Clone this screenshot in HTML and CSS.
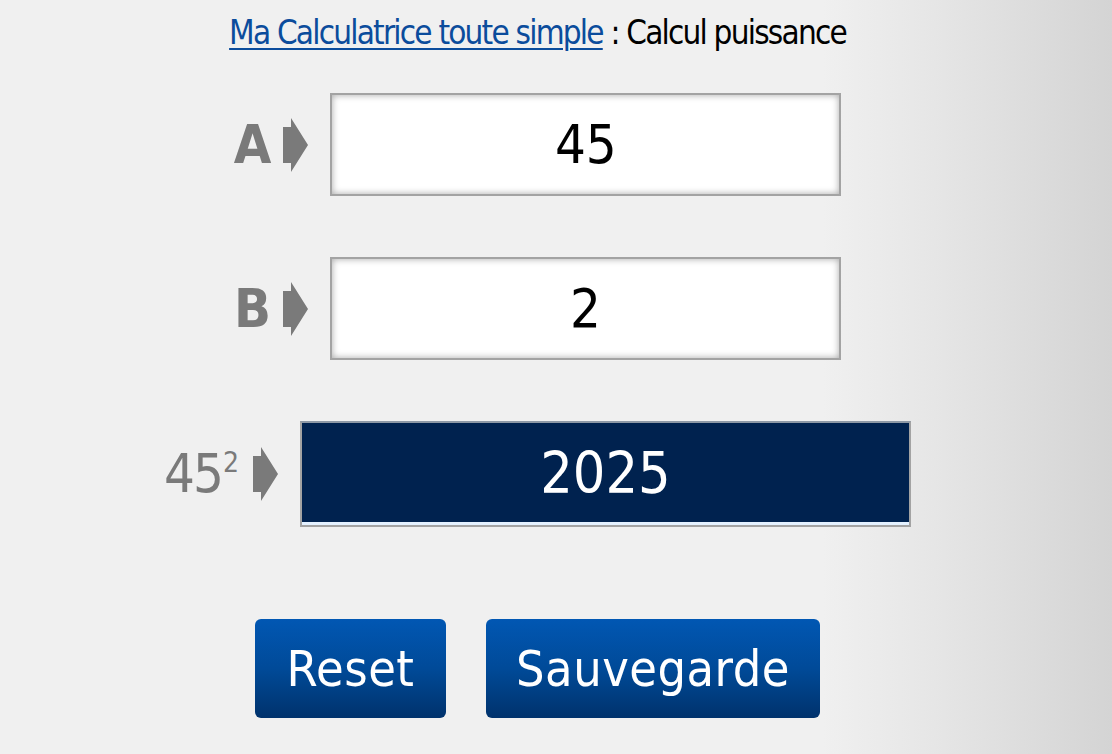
FILE: index.html
```html
<!DOCTYPE html>
<html lang="fr">
<head>
    <meta charset="UTF-8">
    <meta name="viewport" content="width=device-width, initial-scale=1.0">
    <title>Ma Calculatrice toute simple | Calcul puissance</title>
    <link rel="stylesheet" href="styles.css">
</head>
<body>
    <div class="page">
        <h1 class="page-title">
            <a href="#" class="home-link">Ma Calculatrice toute simple</a> : Calcul puissance
        </h1>

        <form class="calc-form">
            <div class="calc-row">
                <label class="calc-label" for="val-a">
                    <span>A</span>
                    <svg class="arrow" viewBox="0 0 25 54"><path d="M0 9 H8 V0 L25 27 L8 54 V45 H0 Z"/></svg>
                </label>
                <input class="calc-input" id="val-a" type="text" value="45">
            </div>

            <div class="calc-row">
                <label class="calc-label" for="val-b">
                    <span>B</span>
                    <svg class="arrow" viewBox="0 0 25 54"><path d="M0 9 H8 V0 L25 27 L8 54 V45 H0 Z"/></svg>
                </label>
                <input class="calc-input" id="val-b" type="text" value="2">
            </div>

            <div class="calc-row">
                <div class="calc-label result-label">
                    <span>45<sup>2</sup></span>
                    <svg class="arrow" viewBox="0 0 25 54"><path d="M0 9 H8 V0 L25 27 L8 54 V45 H0 Z"/></svg>
                </div>
                <div class="calc-result">2025</div>
            </div>

            <div class="button-row">
                <button type="reset" class="calc-button btn-reset">Reset</button>
                <button type="button" class="calc-button btn-save">Sauvegarde</button>
            </div>
        </form>
    </div>
</body>
</html>
```

FILE: styles.css
```css
:root {
    --text: #000000;
    --label: #7a7a7a;
    --link: #0b4c9c;
    --navy: #00224f;
    --border: #a3a3a3;
}

* {
    margin: 0;
    padding: 0;
    box-sizing: border-box;
}

body {
    min-height: 754px;
    background: linear-gradient(to right, #f0f0f0 0%, #f0f0f0 74%, #e6e6e6 84%, #d4d4d4 100%);
    font-family: 'DejaVu Sans Condensed', 'Liberation Sans', sans-serif;
    color: var(--text);
}

.page {
    width: 1075px;
    padding-top: 13px;
}

.page-title {
    text-align: center;
    font-size: 33px;
    font-weight: normal;
    line-height: 40px;
    letter-spacing: -1.8px;
}

.home-link {
    color: var(--link);
    text-decoration: underline;
    text-decoration-thickness: 2px;
    text-underline-offset: 4px;
}

.calc-form {
    margin-top: 40px;
}

.calc-row {
    display: flex;
    justify-content: center;
    align-items: center;
    gap: 22px;
    margin-bottom: 61px;
}

.calc-label {
    display: flex;
    align-items: center;
    gap: 14px;
    color: var(--label);
    font-size: 54px;
    font-weight: bold;
    line-height: 1;
    letter-spacing: -2px;
}

.calc-label sup {
    font-size: 28px;
    vertical-align: 20px;
    margin-left: 1px;
}

.result-label {
    font-weight: normal;
    gap: 16px;
}

.arrow {
    width: 25px;
    height: 54px;
    fill: var(--label);
}

.calc-input {
    width: 511px;
    height: 103px;
    background: #ffffff;
    border: 2px solid var(--border);
    box-shadow: inset 0 0 7px rgba(0, 0, 0, 0.35);
    text-align: center;
    font-family: inherit;
    font-size: 54px;
    color: var(--text);
    outline: none;
}

.calc-result {
    width: 611px;
    height: 106px;
    background: var(--navy);
    border: 2px solid var(--border);
    border-top-color: #8e99a6;
    box-shadow: inset 0 -3px 0 #e4f1ff;
    color: #ffffff;
    font-size: 57px;
    line-height: 100px;
    text-align: center;
}

.button-row {
    display: flex;
    justify-content: center;
    gap: 40px;
    margin-top: 92px;
}

.calc-button {
    height: 99px;
    border: none;
    border-radius: 6px;
    background: linear-gradient(to bottom, #0157b3 0%, #004a98 50%, #00326c 100%);
    color: #ffffff;
    font-family: inherit;
    font-size: 50px;
    letter-spacing: 0.5px;
    cursor: pointer;
}

.btn-reset {
    width: 191px;
}

.btn-save {
    width: 334px;
}
```
